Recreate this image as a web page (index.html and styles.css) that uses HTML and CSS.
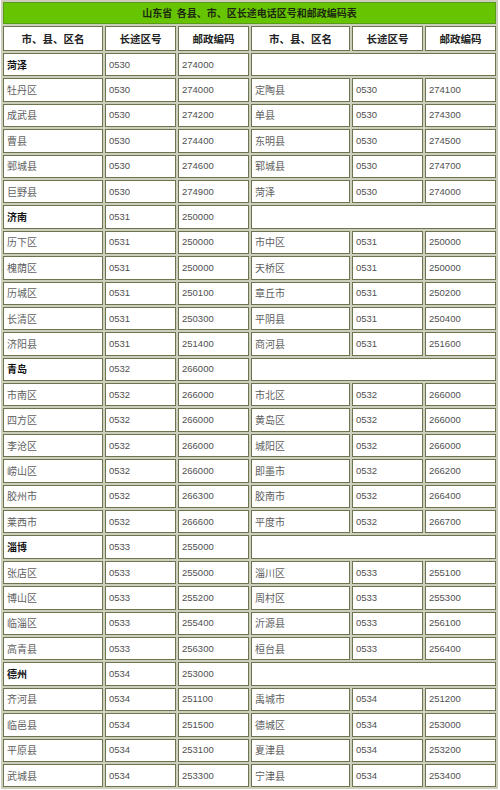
FILE: index.html
```html
<!DOCTYPE html>
<html lang="zh-CN">
<head>
<meta charset="utf-8">
<title>山东省各县、市、区长途电话区号和邮政编码表</title>
<link rel="stylesheet" href="styles.css">
</head>
<body>
<table class="codes">
<colgroup>
<col class="c-name"><col class="c-code"><col class="c-post"><col class="c-name2"><col class="c-code"><col class="c-post">
</colgroup>
<thead>
<tr class="title-row"><th colspan="6" class="title">山东省&nbsp;&nbsp;各县、市、区长途电话区号和邮政编码表</th></tr>
<tr class="head-row"><th>市、县、区名</th><th>长途区号</th><th>邮政编码</th><th>市、县、区名</th><th>长途区号</th><th>邮政编码</th></tr>
</thead>
<tbody>
<tr class="group"><td class="nm">菏泽</td><td class="num">0530</td><td class="num">274000</td><td colspan="3"></td></tr>
<tr><td class="nm">牡丹区</td><td class="num">0530</td><td class="num">274000</td><td class="nm">定陶县</td><td class="num">0530</td><td class="num">274100</td></tr>
<tr><td class="nm">成武县</td><td class="num">0530</td><td class="num">274200</td><td class="nm">单县</td><td class="num">0530</td><td class="num">274300</td></tr>
<tr><td class="nm">曹县</td><td class="num">0530</td><td class="num">274400</td><td class="nm">东明县</td><td class="num">0530</td><td class="num">274500</td></tr>
<tr><td class="nm">鄄城县</td><td class="num">0530</td><td class="num">274600</td><td class="nm">郓城县</td><td class="num">0530</td><td class="num">274700</td></tr>
<tr><td class="nm">巨野县</td><td class="num">0530</td><td class="num">274900</td><td class="nm">菏泽</td><td class="num">0530</td><td class="num">274000</td></tr>
<tr class="group"><td class="nm">济南</td><td class="num">0531</td><td class="num">250000</td><td colspan="3"></td></tr>
<tr><td class="nm">历下区</td><td class="num">0531</td><td class="num">250000</td><td class="nm">市中区</td><td class="num">0531</td><td class="num">250000</td></tr>
<tr><td class="nm">槐荫区</td><td class="num">0531</td><td class="num">250000</td><td class="nm">天桥区</td><td class="num">0531</td><td class="num">250000</td></tr>
<tr><td class="nm">历城区</td><td class="num">0531</td><td class="num">250100</td><td class="nm">章丘市</td><td class="num">0531</td><td class="num">250200</td></tr>
<tr><td class="nm">长清区</td><td class="num">0531</td><td class="num">250300</td><td class="nm">平阴县</td><td class="num">0531</td><td class="num">250400</td></tr>
<tr><td class="nm">济阳县</td><td class="num">0531</td><td class="num">251400</td><td class="nm">商河县</td><td class="num">0531</td><td class="num">251600</td></tr>
<tr class="group"><td class="nm">青岛</td><td class="num">0532</td><td class="num">266000</td><td colspan="3"></td></tr>
<tr><td class="nm">市南区</td><td class="num">0532</td><td class="num">266000</td><td class="nm">市北区</td><td class="num">0532</td><td class="num">266000</td></tr>
<tr><td class="nm">四方区</td><td class="num">0532</td><td class="num">266000</td><td class="nm">黄岛区</td><td class="num">0532</td><td class="num">266000</td></tr>
<tr><td class="nm">李沧区</td><td class="num">0532</td><td class="num">266000</td><td class="nm">城阳区</td><td class="num">0532</td><td class="num">266000</td></tr>
<tr><td class="nm">崂山区</td><td class="num">0532</td><td class="num">266000</td><td class="nm">即墨市</td><td class="num">0532</td><td class="num">266200</td></tr>
<tr><td class="nm">胶州市</td><td class="num">0532</td><td class="num">266300</td><td class="nm">胶南市</td><td class="num">0532</td><td class="num">266400</td></tr>
<tr><td class="nm">莱西市</td><td class="num">0532</td><td class="num">266600</td><td class="nm">平度市</td><td class="num">0532</td><td class="num">266700</td></tr>
<tr class="group"><td class="nm">淄博</td><td class="num">0533</td><td class="num">255000</td><td colspan="3"></td></tr>
<tr><td class="nm">张店区</td><td class="num">0533</td><td class="num">255000</td><td class="nm">淄川区</td><td class="num">0533</td><td class="num">255100</td></tr>
<tr><td class="nm">博山区</td><td class="num">0533</td><td class="num">255200</td><td class="nm">周村区</td><td class="num">0533</td><td class="num">255300</td></tr>
<tr><td class="nm">临淄区</td><td class="num">0533</td><td class="num">255400</td><td class="nm">沂源县</td><td class="num">0533</td><td class="num">256100</td></tr>
<tr><td class="nm">高青县</td><td class="num">0533</td><td class="num">256300</td><td class="nm">桓台县</td><td class="num">0533</td><td class="num">256400</td></tr>
<tr class="group"><td class="nm">德州</td><td class="num">0534</td><td class="num">253000</td><td colspan="3"></td></tr>
<tr><td class="nm">齐河县</td><td class="num">0534</td><td class="num">251100</td><td class="nm">禹城市</td><td class="num">0534</td><td class="num">251200</td></tr>
<tr><td class="nm">临邑县</td><td class="num">0534</td><td class="num">251500</td><td class="nm">德城区</td><td class="num">0534</td><td class="num">253000</td></tr>
<tr><td class="nm">平原县</td><td class="num">0534</td><td class="num">253100</td><td class="nm">夏津县</td><td class="num">0534</td><td class="num">253200</td></tr>
<tr><td class="nm">武城县</td><td class="num">0534</td><td class="num">253300</td><td class="nm">宁津县</td><td class="num">0534</td><td class="num">253400</td></tr>
</tbody>
</table>
</body>
</html>
```
FILE: styles.css
```css
html, body {
  margin: 0;
  padding: 0;
  background: #ffffff;
}
body {
  padding-left: 1px;
  font-family: "Liberation Serif", "Noto Sans CJK SC", serif;
}
.codes {
  table-layout: fixed;
  width: 497px;
  border-collapse: separate;
  border-spacing: 2px;
  background: #cdcebb;
}
.c-name { width: 100px; }
.c-name2 { width: 99px; }
.c-code { width: 71px; }
.c-post { width: 71px; }
.codes th,
.codes td {
  box-sizing: border-box;
  border: 1px solid #6c7450;
  background: #ffffff;
  padding: 0 3px;
  line-height: 12px;
  overflow: hidden;
  white-space: nowrap;
}
.codes th.title {
  height: 22px;
  background: #66c400;
  border-color: #5a9a1a;
  color: #1e2a10;
  font-family: "Noto Sans CJK SC", sans-serif;
  font-size: 10px;
  font-weight: 700;
  text-align: center;
}
.head-row th {
  height: 25px;
  font-family: "Noto Sans CJK SC", sans-serif;
  font-size: 10.5px;
  font-weight: 700;
  color: #222222;
  text-align: center;
}
.codes td {
  height: 23.4px;
}
.nm {
  font-family: "Noto Sans CJK SC", sans-serif;
  font-size: 10px;
  color: #606060;
  padding-left: 4px;
}
.group .nm {
  font-weight: 700;
  color: #111111;
}
.num {
  font-family: "Liberation Sans", Arial, sans-serif;
  font-size: 9.5px;
  color: #505050;
}
```
